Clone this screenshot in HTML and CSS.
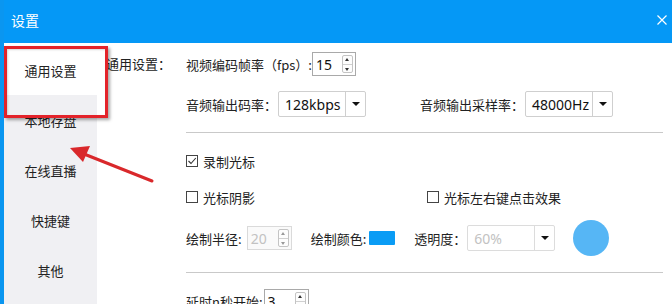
FILE: index.html
```html
<!DOCTYPE html>
<html lang="zh">
<head>
<meta charset="utf-8">
<title>设置</title>
<link rel="stylesheet" href="styles.css">
</head>
<body>
<div class="window">
  <div class="titlebar">
    <span class="title">设置</span>
    <svg class="close" width="10" height="10" viewBox="0 0 10 10"><path d="M0.5 0.5 L9.5 9.5 M9.5 0.5 L0.5 9.5" stroke="#fff" stroke-width="1.2" fill="none"/></svg>
  </div>
  <div class="main">
    <nav class="sidebar">
      <div class="nav-item active">通用设置</div>
      <div class="nav-item">本地存盘</div>
      <div class="nav-item">在线直播</div>
      <div class="nav-item">快捷键</div>
      <div class="nav-item">其他</div>
    </nav>
    <div class="content">
      <div class="section-label">通用设置：</div>
      <div class="form">
        <div class="row r1">
          <span class="lbl">视频编码帧率（fps）:</span>
          <div class="spin w44"><span class="val">15</span><span class="btns"><span class="up"></span><span class="dn"></span></span></div>
        </div>
        <div class="row r2">
          <div class="group g234">
            <span class="lbl">音频输出码率：</span>
            <div class="select"><span class="val">128kbps</span><span class="drop"></span></div>
          </div>
          <span class="lbl">音频输出采样率：</span>
          <div class="select"><span class="val">48000Hz</span><span class="drop"></span></div>
        </div>
        <div class="sep s1"></div>
        <div class="row r3">
          <label class="check"><span class="box checked"><svg width="10" height="10" viewBox="0 0 10 10"><path d="M1.5 5 L4 7.5 L8.8 2" stroke="#333" stroke-width="1.1" fill="none"/></svg></span>录制光标</label>
        </div>
        <div class="row r4">
          <label class="check g241"><span class="box"></span>光标阴影</label>
          <label class="check"><span class="box"></span>光标左右键点击效果</label>
        </div>
        <div class="row r5">
          <span class="lbl">绘制半径:</span>
          <div class="spin w45 disabled gap5"><span class="val">20</span><span class="btns"><span class="up"></span><span class="dn"></span></span></div>
          <span class="lbl ml19">绘制颜色:</span>
          <span class="swatch"></span>
          <span class="lbl ml19">透明度：</span>
          <div class="select disabled"><span class="val">60%</span><span class="drop"></span></div>
          <span class="circle"></span>
        </div>
        <div class="sep s2"></div>
        <div class="row r6">
          <span class="lbl">延时n秒开始:</span>
          <div class="spin w45 gap0"><span class="val">3</span><span class="btns"><span class="up"></span><span class="dn"></span></span></div>
        </div>
      </div>
    </div>
  </div>
  <div class="highlight"></div>
  <svg class="arrow" width="120" height="60" viewBox="0 0 120 60">
    <path d="M92 43 L24 16" stroke="#d9282b" stroke-width="3" stroke-linecap="round" fill="none"/>
    <path d="M10 10 L30 8 L23 24 Z" fill="#d9282b"/>
  </svg>
</div>
</body>
</html>
```

FILE: styles.css
```css
* { box-sizing: border-box; }
html, body { margin: 0; padding: 0; }
body {
  width: 672px;
  height: 304px;
  overflow: hidden;
  background: #fff;
  font-family: "Noto Sans CJK SC", "Noto Sans", sans-serif;
  font-size: 13px;
  color: #333;
}
.window {
  position: relative;
  width: 672px;
  height: 304px;
  overflow: hidden;
  border-left: 4px solid #0a96f0;
}
.titlebar {
  height: 43px;
  margin-left: -4px;
  background: #0598f6;
  display: flex;
  align-items: center;
  justify-content: space-between;
  padding: 0 5px 4px 11px;
}
.title { color: #fff; font-size: 14px; }
.main {
  display: flex;
  height: 261px;
  overflow: hidden;
}
.sidebar {
  width: 93px;
  flex-shrink: 0;
  margin-top: 2px;
  background: #f0f0f3;
  display: flex;
  flex-direction: column;
}
.nav-item {
  height: 50px;
  flex-shrink: 0;
  display: flex;
  align-items: center;
  justify-content: center;
  color: #222;
  font-size: 13px;
}
.nav-item.active { background: #fff; }
.content {
  flex: 1;
  display: flex;
  padding-left: 9px;
  padding-right: 9px;
}
.section-label {
  width: 80px;
  flex-shrink: 0;
  padding-top: 11px;
  color: #222;
}
.form { flex: 1; display: flex; flex-direction: column; }
.form > * { flex-shrink: 0; }
.row { display: flex; align-items: center; }
.r1 { height: 24px; margin-top: 9px; }
.r2 { height: 26px; margin-top: 15px; }
.s1 { margin-top: 15px; }
.r3 { height: 24px; margin-top: 16px; }
.r4 { height: 24px; margin-top: 12px; }
.r5 { height: 36px; margin-top: 11px; }
.s2 { margin-top: 16px; }
.r6 { height: 24px; margin-top: 16px; }
.sep { height: 1px; background: #c9c9c9; width: 477px; }
.lbl { white-space: nowrap; color: #222; }
.group { display: flex; align-items: center; }
.g234 { width: 234px; }
.g241 { width: 241px; }
.ml19 { margin-left: 19px; }

.spin {
  height: 24px;
  border: 1px solid #a9a9a9;
  background: #fff;
  display: flex;
  align-items: center;
  justify-content: space-between;
  padding: 0 2px 0 3px;
  font-family: "Noto Sans", sans-serif;
  font-size: 14px;
  color: #111;
}
.w44 { width: 44px; }
.w45 { width: 45px; }
.gap5 { margin-left: 5px; }
.gap0 { margin-left: 1px; }
.spin.disabled { border-color: #dadada; color: #c2c2c2; background: #fafafa; }
.btns {
  width: 11px;
  height: 18px;
  border: 1px solid #c4c4c4;
  border-radius: 2px;
  display: flex;
  flex-direction: column;
  background: #fdfdfd;
}
.btns .up, .btns .dn {
  flex: 1;
  position: relative;
}
.btns .up { border-bottom: 1px solid #d0d0d0; }
.btns .up::after, .btns .dn::after {
  content: "";
  position: absolute;
  left: 2px;
  border-left: 2.5px solid transparent;
  border-right: 2.5px solid transparent;
}
.btns .up::after { top: 2px; border-bottom: 3px solid #333; }
.btns .dn::after { top: 3px; border-top: 3px solid #333; }
.spin.disabled .btns .up::after { border-bottom-color: #999; }
.spin.disabled .btns .dn::after { border-top-color: #999; }

.select {
  width: 88px;
  height: 26px;
  margin-left: 1px;
  border: 1px solid #cfcfcf;
  border-radius: 2px;
  background: #fff;
  display: flex;
  align-items: center;
  justify-content: space-between;
  font-family: "Noto Sans", sans-serif;
  font-size: 14px;
  color: #111;
}
.select .val { padding-left: 6px; }
.select .drop {
  width: 20px;
  height: 24px;
  border-left: 1px solid #cfcfcf;
  position: relative;
}
.select .drop::after {
  content: "";
  position: absolute;
  left: 6px;
  top: 10px;
  border-left: 4px solid transparent;
  border-right: 4px solid transparent;
  border-top: 4px solid #111;
}
.select.disabled { color: #c2c2c2; border-color: #dcdcdc; }
.select.disabled .drop { border-left-color: #dcdcdc; }

.check { display: flex; align-items: center; color: #222; }
.box {
  width: 12px;
  height: 12px;
  border: 1px solid #444;
  margin-right: 5px;
  display: flex;
  align-items: center;
  justify-content: center;
}
.swatch {
  width: 26px;
  height: 14px;
  margin-left: 3px;
  background: #0a9cf5;
  border-radius: 1px;
}
.circle {
  width: 36px;
  height: 36px;
  margin-left: 18px;
  border-radius: 50%;
  background: #56b6f5;
}

.highlight {
  position: absolute;
  left: 0px;
  top: 46px;
  width: 104px;
  height: 72px;
  border: 3px solid #e3232a;
  box-shadow: 2px 2px 3px rgba(0,0,0,0.35), inset 1px 1px 2px rgba(0,0,0,0.15);
}
.arrow {
  position: absolute;
  left: 56px;
  top: 138px;
}
```
